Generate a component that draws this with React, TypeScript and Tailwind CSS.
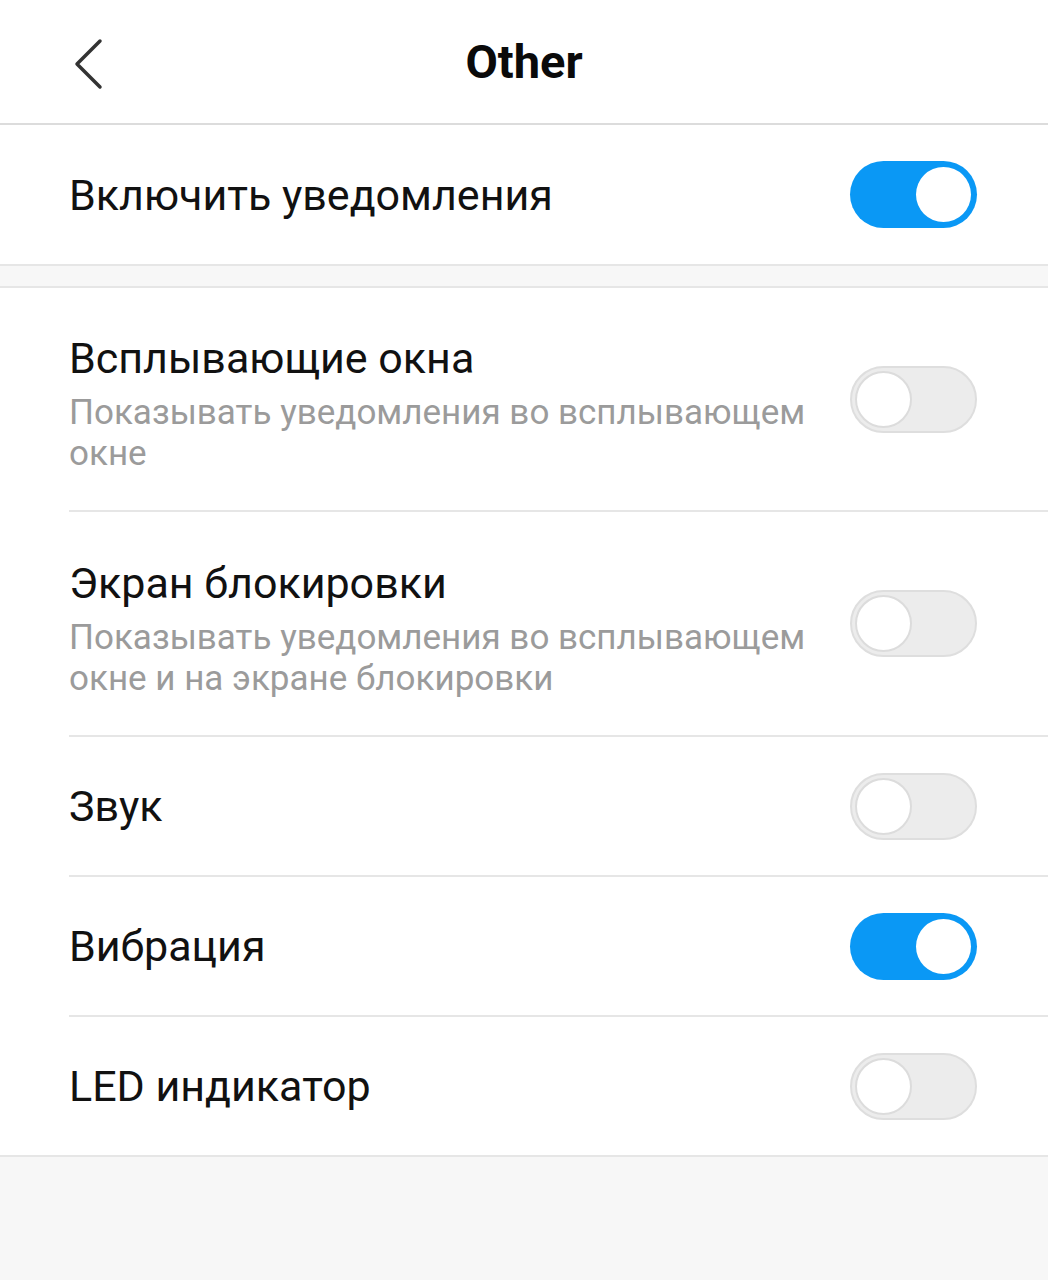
import React from "react";

function Toggle({ on }: { on: boolean }) {
  if (on) {
    return (
      <div className="relative h-[67px] w-[127px] shrink-0 rounded-full bg-[#0a98f5]">
        <div className="absolute right-[6px] top-[6px] h-[55px] w-[55px] rounded-full bg-white" />
      </div>
    );
  }
  return (
    <div className="relative h-[67px] w-[127px] shrink-0 rounded-full border-2 border-[#dedede] bg-[#ececec]">
      <div className="absolute left-[3px] top-[3px] h-[57px] w-[57px] rounded-full border-2 border-[#dcdcdc] bg-white" />
    </div>
  );
}

function Row({
  title,
  subtitle,
  on,
  h,
  divider,
}: {
  title: string;
  subtitle?: string;
  on: boolean;
  h: string;
  divider?: boolean;
}) {
  return (
    <div className="pl-[69px]">
      <div className={`flex items-center justify-between pr-[71px] ${h} ${divider ? "border-b-2 border-[#e6e6e6]" : ""}`}>
        <div className={`flex flex-col ${subtitle ? "mt-[9px]" : ""}`}>
          <div className="text-[43px] leading-[50px] text-[#111]">{title}</div>
          {subtitle && (
            <div className="mt-[9px] max-w-[770px] text-[35px] leading-[41px] text-[#9b9b9b]">{subtitle}</div>
          )}
        </div>
        <Toggle on={on} />
      </div>
    </div>
  );
}

export default function App() {
  return (
    <div className="min-h-[1280px] bg-[#f7f7f7]" style={{ fontFamily: "Roboto, 'Noto Sans', sans-serif" }}>
      <div className="relative flex h-[125px] items-center justify-center border-b-2 border-[#dcdcdc] bg-white">
        <svg className="absolute left-[70px] top-[38px]" width="36" height="52" viewBox="0 0 36 52" fill="none">
          <path d="M30 3 L7 26 L30 49" stroke="#333" strokeWidth="3.5" strokeLinecap="round" strokeLinejoin="round" />
        </svg>
        <div className="text-[47px] font-bold leading-none text-[#0a0a0a]">Other</div>
      </div>
      <div className="flex h-[139px] items-center justify-between bg-white pl-[69px] pr-[71px]">
        <div className="text-[43px] leading-[50px] text-[#111]">Включить уведомления</div>
        <Toggle on={true} />
      </div>
      <div className="h-[24px] border-y-2 border-[#e6e6e6] bg-[#f7f7f7]" />
      <div className="border-b-2 border-[#e6e6e6] bg-white">
        <Row h="h-[224px]" title="Всплывающие окна" subtitle="Показывать уведомления во всплывающем окне" on={false} divider />
        <Row h="h-[225px]" title="Экран блокировки" subtitle="Показывать уведомления во всплывающем окне и на экране блокировки" on={false} divider />
        <Row h="h-[140px]" title="Звук" on={false} divider />
        <Row h="h-[140px]" title="Вибрация" on={true} divider />
        <Row h="h-[138px]" title="LED индикатор" on={false} />
      </div>
    </div>
  );
}
